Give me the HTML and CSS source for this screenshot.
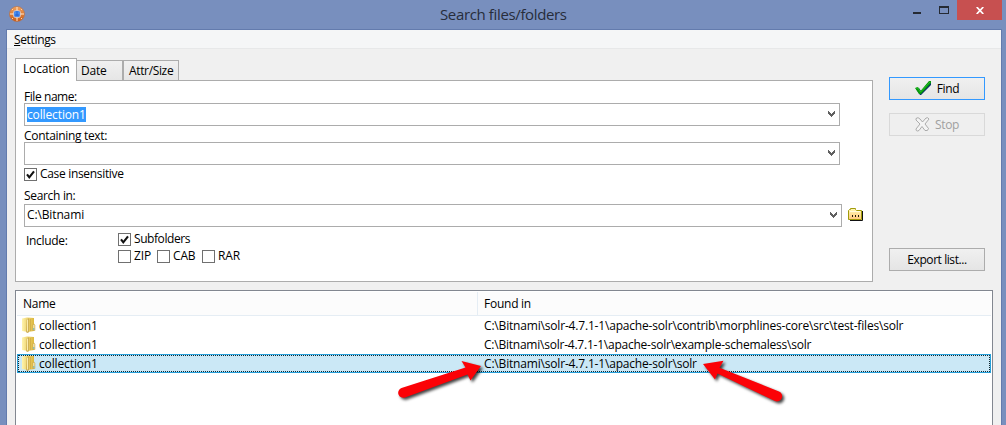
FILE: index.html
```html
<!DOCTYPE html>
<html lang="en">
<head>
<meta charset="utf-8">
<title>Search files/folders</title>
<link rel="stylesheet" href="styles.css">
</head>
<body>
<svg class="defs" width="0" height="0">
  <defs>
    <linearGradient id="gold" x1="0" x2="1"><stop offset="0" stop-color="#fff4ae"/><stop offset=".5" stop-color="#ecd16c"/><stop offset="1" stop-color="#dcb83e"/></linearGradient>
    <linearGradient id="orange" x1="0" y1="0" x2="0" y2="1"><stop offset="0" stop-color="#f2a25c"/><stop offset="1" stop-color="#c85a16"/></linearGradient>
    <linearGradient id="browse" x1="0" y1="0" x2="0" y2="1"><stop offset="0" stop-color="#fffbb5"/><stop offset="1" stop-color="#ffc77e"/></linearGradient>
    <symbol id="chevron" viewBox="0 0 8 7"><path d="M0 0h1v1h1v1h1v1h1V2h1V1h1V0h1v3H6v1H5v1H4v1H3V5H2V4H1V3H0z" fill="#606060"/></symbol>
    <symbol id="folder" viewBox="0 0 14 17">
      <path d="M0 1.5 5 .5 12 1v13l-6 1-6-1z" fill="url(#gold)"/>
      <path d="M4.7 2.5 7 1.2v14L5 16l-.8-1z" fill="#c9a84c"/>
      <path d="M5.6 2.5v12" stroke="#fff3ba"/>
      <path d="M8.4 2v12" stroke="#c9a544" stroke-width=".7"/>
      <path d="M10.8 7.5q2-.8 2 .7v5.3h-2z" fill="#f8edbd" stroke="#c9a63d" stroke-width=".7"/>
      <path d="M11.8 11v2" stroke="#68aeb5"/>
    </symbol>
  </defs>
</svg>
<div class="window">
  <header class="titlebar">
    <svg class="app-icon" viewBox="0 0 16 16">
      <circle cx="8" cy="8" r="7.6" fill="url(#orange)" stroke="#b8744e" stroke-width=".6"/>
      <circle cx="8" cy="8" r="4" fill="#4a8df0" stroke="#dfb6a0" stroke-width="1"/>
      <path d="M8 1v4M8 11v4M1 8h4M11 8h4" stroke="#ffe6c9"/>
      <path d="M3 3l1 1M13 3l-1 1M3 13l1-1M13 13l-1-1" stroke="#ffd2a5"/>
      <path d="M8 5v5M6 9h4" stroke="#2463d0"/>
    </svg>
    <h1 class="title">Search files/folders</h1>
    <div class="controls">
      <svg class="minmax" viewBox="0 0 46 20"><path d="M2 12h8v2H2z" fill="#252a33"/><path d="M28 6h10v8H28zm1 2v5h8V8z" fill="#252a33" fill-rule="evenodd"/></svg>
      <div class="close"><svg viewBox="0 0 8 7"><path d="M.7 0 7.3 7M7.3 0 .7 7" stroke="#fff" stroke-width="1.7"/></svg></div>
    </div>
  </header>
  <div class="client">
    <nav class="menu"><span class="menu-item"><u>S</u>ettings</span></nav>
    <main class="content">
      <div class="search">
        <section class="notebook">
          <div class="tabs">
            <div class="tab active"><span class="t-location">Location</span></div>
            <div class="tab date"><span class="t-date">Date</span></div>
            <div class="tab attr"><span class="t-attr">Attr/Size</span></div>
          </div>
          <div class="panel">
            <div class="label l1"><span class="t-file">File name:</span></div>
            <div class="combo"><span class="selected-text t-coll">collection1</span><svg class="chevron"><use href="#chevron"/></svg></div>
            <div class="label l2"><span class="t-containing">Containing text:</span></div>
            <div class="combo"><span></span><svg class="chevron"><use href="#chevron"/></svg></div>
            <div class="check case"><i class="box"><svg viewBox="0 0 11 11"><path d="M2 5.300l2.300 3L9 2.300" fill="none" stroke="#111" stroke-width="2.1"/></svg></i><span class="t-case">Case insensitive</span></div>
            <div class="label l3"><span class="t-search">Search in:</span></div>
            <div class="folder-row">
              <div class="combo wide"><span class="t-path">C:\Bitnami</span><svg class="chevron"><use href="#chevron"/></svg></div>
              <svg class="browse" viewBox="0 0 15 13">
                <path d="M2 12.500h12.500V3" fill="none" stroke="#111"/>
                <path d="M.5 11.5v-9l1-1h1v-1h5v1l1 1h5v9z" fill="url(#browse)" stroke="#a19b0b"/>
                <path d="M2 3.5h10" stroke="#fffde0"/>
                <path d="M4 7h1v2H4zM7 7h1v2H7zM10 7h1v2h-1z" fill="#201908"/>
              </svg>
            </div>
            <div class="include">
              <span class="include-label t-include">Include:</span>
              <div class="options">
                <div class="check"><i class="box"><svg viewBox="0 0 11 11"><path d="M2 5.300l2.300 3L9 2.300" fill="none" stroke="#111" stroke-width="2.1"/></svg></i><span class="t-sub">Subfolders</span></div>
                <div class="archives">
                  <div class="check zip"><i class="box"></i><span class="t-zip">ZIP</span></div>
                  <div class="check cab"><i class="box"></i><span class="t-cab">CAB</span></div>
                  <div class="check"><i class="box"></i><span class="t-rar">RAR</span></div>
                </div>
              </div>
            </div>
          </div>
        </section>
        <aside class="actions">
          <button class="button find"><svg class="tick" viewBox="0 0 17 15"><path d="M1 8 4 7l2 3L14 1h2v3L6 14H5z" fill="#073064"/><path d="M0 7l3-1 2.5 4L14 0h2v2L6 13H4z" fill="#079a0b"/><path d="M1 7h2l2.5 4L15 1" fill="none" stroke="#32cd32" stroke-width=".7"/></svg><span class="t-find">Find</span></button>
          <button class="button stop" disabled><svg class="cross" viewBox="0 0 15 15"><path d="M1 1.5Q3-.5 5 2l2.500 3L11 1q2-1 3 1L10 7l3.500 4.500q-.5 3-3.500 2L7 9.500l-3 4q-3 1.500-3-1.500l4-5-4-4z" fill="#f4f4f4" stroke="#999" stroke-width=".8"/></svg><span class="t-stop">Stop</span></button>
          <button class="button export"><span class="t-export">Export list...</span></button>
        </aside>
      </div>
      <section class="list">
        <div class="list-head"><div class="col-name"><span class="t-name">Name</span></div><div class="col-found"><span class="t-found">Found in</span></div></div>
        <div class="row"><svg class="folder"><use href="#folder"/></svg><span class="row-name t-coll">collection1</span><span class="t-row1">C:\Bitnami\solr-4.7.1-1\apache-solr\contrib\morphlines-core\src\test-files\solr</span></div>
        <div class="row"><svg class="folder"><use href="#folder"/></svg><span class="row-name t-coll">collection1</span><span class="t-row2">C:\Bitnami\solr-4.7.1-1\apache-solr\example-schemaless\solr</span></div>
        <div class="row chosen"><svg class="folder"><use href="#folder"/></svg><span class="row-name t-coll">collection1</span><span class="t-row3">C:\Bitnami\solr-4.7.1-1\apache-solr\solr</span></div>
      </section>
    </main>
  </div>
  <svg class="arrows" viewBox="0 0 1006 425">
    <path d="M481 366 461.5 361l4 6.5-64 20.5a5 5 0 0 0 3.5 9.5L467.500 374.500l3 6z"/>
    <path d="M703 364 723.500 360.700l-4 7 59.500 23.800a5 5 0 0 1-4 9.500L717.500 373.500l-2.500 6z"/>
  </svg>
</div>
</body>
</html>
```
FILE: styles.css
```css
* { box-sizing: border-box; }
body { margin: 0; overflow: hidden; font: 12px/16px "Open Sans", "Noto Sans", sans-serif; color: #000; }
.defs { position: absolute; }
svg { display: block; flex: none; }
span { white-space: nowrap; }
.window { position: relative; width: 1006px; height: 425px; padding: 0 4px 0 6px; background: #788fbe; overflow: hidden; }
.titlebar { display: flex; height: 29px; padding-left: 3px; }
.app-icon { width: 16px; height: 16px; margin-top: 6px; }
.title { width: 127px; margin: 4px 0 0 415px; font-size: 15px; line-height: 21px; font-weight: 400; color: #272d3b; white-space: nowrap; letter-spacing: -.36px; }
.controls { display: flex; margin-left: auto; }
.minmax { width: 46px; height: 20px; }
.close { display: flex; justify-content: center; align-items: center; width: 45px; height: 20px; background: #c75050; }
.close svg { width: 8px; height: 7px; margin-top: 1px; }
.client { height: 396px; border: solid #637bad; border-width: 1px 1px 0; background: #f0f0f0; }
.menu { height: 19px; padding: 2px 7px; border-bottom: 1px solid #e7e8e9; background: #f5f6f7; }
.menu-item { letter-spacing: -.35px; }
.content { padding: 9px 8px 0 8px; }
.search { display: flex; }
.notebook { width: 858px; }
.tabs { display: flex; align-items: flex-end; height: 22px; }
.tab { height: 20px; padding: 2px 0 0 5px; border: 1px solid #acacac; border-left: 0; border-bottom: 0; background: linear-gradient(#f0f0f0, #e6e6e6); }
.tab.active { width: 62px; height: 23px; margin-bottom: -1px; padding: 2px 0 0 7px; border-left: 1px solid #acacac; background: #fff; z-index: 1; }
.tab.date { width: 46px; padding-left: 4px; }
.tab.attr { width: 56px; border-left: 1px solid #acacac; }
.panel { height: 202px; padding: 7px 0 0 8px; border: 1px solid #acacac; background: #fff; }
.label { height: 15px; line-height: 17px; }
.label.l2 { height: 16px; padding-top: 1px; }
.label.l3 { height: 16px; margin-top: 6px; line-height: 16px; }
.combo { display: flex; align-items: center; justify-content: space-between; width: 816px; height: 23px; padding: 0 3px 0 2px; border: 1px solid #acacac; background: #fff; }
.combo.wide { width: 818px; }
.combo.wide span { margin-top: -1px; }
.selected-text { height: 15px; line-height: 15px; background: #3399ff; color: #fff; }
.chevron { width: 8px; height: 7px; }
.check { display: flex; align-items: center; height: 16px; gap: 3px; }
.check.case { margin-top: 1px; }
.box { flex: none; width: 13px; height: 13px; border: 1px solid #707070; background: #fff; }
.box svg { width: 11px; height: 11px; }
.folder-row { display: flex; gap: 6px; }
.browse { width: 15px; height: 13px; margin-top: 4px; }
.include { display: flex; margin-top: 4px; padding-left: 2px; }
.include-label { width: 92px; padding-top: 2px; }
.archives { display: flex; margin-top: 1px; }
.zip { width: 39px; }
.cab { width: 45px; }
.actions { display: flex; flex-direction: column; width: 96px; margin: 19px 0 0 16px; }
.button { display: flex; justify-content: center; align-items: center; gap: 5px; height: 23px; padding: 0; border: 1px solid #acacac; background: linear-gradient(#f0f0f0, #e5e5e5); font: inherit; color: #000; }
.find { border-color: #3399ff; }
.stop { margin-top: 13px; border-color: #d9d9d9; background: #efefef; color: #a0a0a0; }
.export { margin-top: 112px; }
.tick { width: 17px; height: 15px; }
.cross { width: 15px; height: 15px; }
.list { height: 136px; margin-top: 8px; padding: 1px; border: 1px solid #828790; border-bottom: 0; background: #fff; }
.list-head { display: flex; height: 24px; border-bottom: 1px solid #e5edf4; background: #fcfcfc; line-height: 24px; }
.col-name { width: 461px; padding-left: 6px; border-right: 1px solid #e5edf4; }
.col-found { padding-left: 6px; }
.row { display: flex; align-items: center; height: 19px; padding-left: 5px; }
.folder { width: 14px; height: 17px; margin-right: 3px; }
.row-name { width: 445px; }
.row.chosen { padding-left: 3px; border: 1px solid #26a0da; background: #cbe8f6; outline: 1px dotted #102730; outline-offset: -2px; }
.row.chosen .folder { margin-left: 1px; }
.t-location, .t-zip, .t-cab, .t-rar { letter-spacing: -.15px; }
.t-date, .t-name, .t-found { letter-spacing: -.25px; }
.t-attr, .t-find, .t-stop { letter-spacing: -.35px; }
.t-file, .t-sub, .t-export { letter-spacing: -.43px; }
.t-containing, .t-case, .t-search, .t-include { letter-spacing: -.32px; }
.t-coll, .t-path { letter-spacing: -.13px; }
.t-row1, .t-row3 { letter-spacing: -.18px; }
.t-row2 { letter-spacing: -.23px; }
.arrows { position: absolute; inset: 0; width: 1006px; height: 425px; fill: #fb0207; filter: drop-shadow(2px 2px 1.5px rgba(0, 0, 0, .75)); }
```
